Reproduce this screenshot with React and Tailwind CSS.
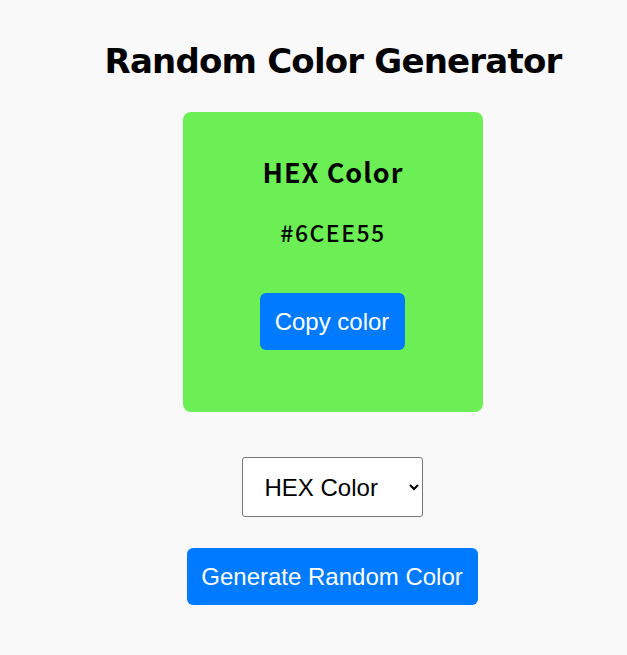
import React, { useState } from "react";

const App = () => {
  const [type, setType] = useState("hex");
  const color = "#6CEE55";

  return (
    <div className="min-h-[655px] bg-[#f9f9f9] pl-[39px]">
      <div className="flex flex-col items-center pt-[39px]">
        {/* Title */}
        <h1 className="text-[34px] leading-[44px] font-bold text-black [font-family:'DejaVu_Sans',sans-serif] tracking-[-0.8px]">
          Random Color Generator
        </h1>

        {/* Color card */}
        <div
          className="mt-[29px] flex h-[300px] w-[300px] flex-col items-center rounded-[8px] pt-[45px]"
          style={{ backgroundColor: color }}
        >
          <h2 className="text-[27px] leading-[30px] font-bold tracking-[1px] text-black [font-family:'Noto_Sans_CJK_KR',sans-serif]">
            HEX Color
          </h2>
          <p className="mt-[32px] text-[23px] leading-[26px] font-medium tracking-[1.5px] text-black [font-family:'Noto_Sans_CJK_KR',sans-serif]">
            {color}
          </p>
          <button className="mt-[48px] mr-[2px] h-[57px] w-[145px] rounded-[6px] bg-[#007bff] text-[24px] text-white [font-family:'Liberation_Sans',Arial,sans-serif]">
            Copy color
          </button>
        </div>

        {/* Type select */}
        <select
          value={type}
          onChange={(e) => setType(e.target.value)}
          className="mt-[45px] mr-[2px] h-[60px] w-[181px] rounded-[3px] border border-[#767676] bg-white pl-[18px] text-[24px] text-black [font-family:'Liberation_Sans',Arial,sans-serif]"
        >
          <option value="hex">HEX Color</option>
          <option value="rgb">RGB Color</option>
        </select>

        {/* Generate */}
        <button className="mt-[31px] mr-[2px] h-[57px] w-[291px] rounded-[6px] bg-[#007bff] text-[24px] text-white [font-family:'Liberation_Sans',Arial,sans-serif]">
          Generate Random Color
        </button>
      </div>
    </div>
  );
};

export default App;
